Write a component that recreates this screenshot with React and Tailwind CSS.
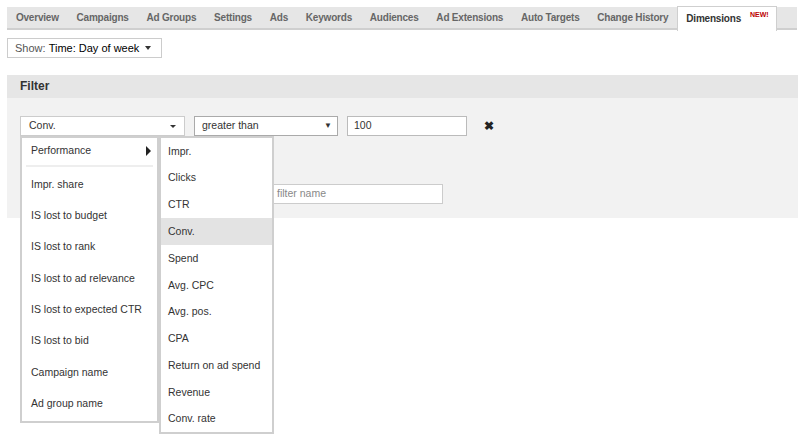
import { useState } from "react";

const tabs = [
  "Overview",
  "Campaigns",
  "Ad Groups",
  "Settings",
  "Ads",
  "Keywords",
  "Audiences",
  "Ad Extensions",
  "Auto Targets",
  "Change History",
];

const leftItems = [
  "Impr. share",
  "IS lost to budget",
  "IS lost to rank",
  "IS lost to ad relevance",
  "IS lost to expected CTR",
  "IS lost to bid",
  "Campaign name",
  "Ad group name",
];

const subItems = [
  "Impr.",
  "Clicks",
  "CTR",
  "Conv.",
  "Spend",
  "Avg. CPC",
  "Avg. pos.",
  "CPA",
  "Return on ad spend",
  "Revenue",
  "Conv. rate",
];

export default function App() {
  const [active, setActive] = useState("Conv.");

  return (
    <div className="w-[800px] h-[439px] bg-white pt-[7px] px-[7px] text-[#333] font-['Liberation_Sans',Arial,sans-serif] overflow-hidden">
      {/* tab bar */}
      <div className="flex h-[23px] bg-[#e6e6e6] border-b-2 border-[#cfcfcf] w-[790px]">
        {tabs.map((t) => (
          <div key={t} className="px-[8.9px] text-[10px] tracking-[-0.2px] font-bold text-[#666] leading-[22px] whitespace-nowrap">
            {t}
          </div>
        ))}
        <div className="h-[25px] -mt-[1px] bg-white border border-b-0 border-[#cfcfcf] pl-[8px] pr-[7px] text-[10px] tracking-[-0.2px] font-bold text-[#333] leading-[24px] whitespace-nowrap flex">
          Dimensions
          <span className="text-[7px] tracking-normal text-[#b00] ml-[9px] leading-[15px]">NEW!</span>
        </div>
      </div>

      {/* show selector */}
      <div className="mt-[8px] w-[155px] h-[20px] border border-[#ccc] flex items-center pl-[7px] text-[11px] whitespace-nowrap">
        <span className="text-[#555]">Show:&nbsp;</span>
        <span className="text-black">Time: Day of week</span>
        <span className="ml-[6px] w-0 h-0 border-l-[3.5px] border-r-[3.5px] border-t-[4px] border-l-transparent border-r-transparent border-t-[#333]"></span>
      </div>

      {/* filter panel */}
      <div className="mt-[17px] w-[791px]">
        <div className="h-[23px] bg-[#e6e6e6] pl-[13px] text-[12px] font-bold text-[#333] leading-[23px]">Filter</div>
        <div className="relative h-[120px] bg-[#f2f2f2] pt-[18px] pl-[13px]">
          <div className="flex items-center">
            <div className="w-[165px] h-[20px] bg-white border border-[#ccc] flex items-center justify-between pl-[8px] pr-[8px] text-[10.5px]">
              <span>{active}</span>
              <span className="w-0 h-0 border-l-[3px] border-r-[3px] border-t-[3px] border-l-transparent border-r-transparent border-t-[#333]"></span>
            </div>
            <div className="ml-[9px] w-[144px] h-[20px] bg-white border border-[#aaa] flex items-center justify-between pl-[7px] pr-[5px] text-[10.5px]">
              <span>greater than</span>
              <span className="text-[8px] leading-none">▼</span>
            </div>
            <div className="ml-[9px] w-[120px] h-[20px] bg-white border border-[#bbb] flex items-center pl-[6px] text-[10.5px]">
              100
            </div>
            <div className="ml-[17px] text-[12px] font-bold text-[#222] leading-none">✖</div>
          </div>

          <div className="mt-[48px] ml-[252px] w-[171px] h-[20px] bg-white border border-[#ccc] flex items-center pl-[4px] text-[10.5px] text-[#888]">
            filter name
          </div>

          {/* dropdown menu */}
          <div className="absolute left-[13px] top-[38px] flex items-start z-10">
            <div className="w-[139px] h-[287px] bg-white border-2 border-[#cfcfcf] text-[10.5px]">
              <div className="h-[26px] flex items-center justify-between pl-[9px] pr-[6px]">
                <span>Performance</span>
                <span className="w-0 h-0 border-t-[5px] border-b-[5px] border-l-[5px] border-t-transparent border-b-transparent border-l-[#222]"></span>
              </div>
              <div className="mx-[4px] mt-[1px] h-[2px] bg-[#eee] mb-[2px]"></div>
              {leftItems.map((item) => (
                <div key={item} className="h-[31.3px] flex items-center pl-[9px] whitespace-nowrap">
                  {item}
                </div>
              ))}
            </div>
            <div className="w-[115px] h-[298px] bg-white border-2 border-[#cfcfcf] text-[10.5px]">
              {subItems.map((item) => (
                <div
                  key={item}
                  onClick={() => setActive(item)}
                  className={`h-[26.8px] flex items-center pl-[7px] whitespace-nowrap ${item === active ? "bg-[#e3e3e3]" : ""}`}
                >
                  {item}
                </div>
              ))}
            </div>
          </div>
        </div>
      </div>
    </div>
  );
}
